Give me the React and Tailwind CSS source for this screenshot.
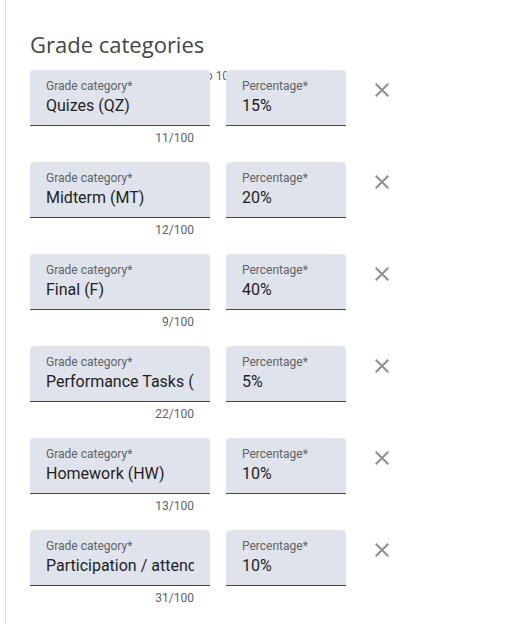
import React from "react";

const rows = [
  { name: "Quizes (QZ)", count: "11/100", pct: "15%" },
  { name: "Midterm (MT)", count: "12/100", pct: "20%" },
  { name: "Final (F)", count: "9/100", pct: "40%" },
  { name: "Performance Tasks (PT)", count: "22/100", pct: "5%" },
  { name: "Homework (HW)", count: "13/100", pct: "10%" },
  { name: "Participation / attendance (PA)", count: "31/100", pct: "10%" },
];

function CloseIcon() {
  return (
    <svg width="24" height="24" viewBox="0 0 24 24" fill="#8e9195">
      <path d="M19 6.41 17.59 5 12 10.59 6.41 5 5 6.41 10.59 12 5 17.59 6.41 19 12 13.41 17.59 19 19 17.59 13.41 12z" />
    </svg>
  );
}

export default function App() {
  return (
    <div className="w-[518px] h-[624px] bg-white overflow-hidden" style={{ fontFamily: "Roboto, 'Liberation Sans', sans-serif" }}>
      <div className="ml-[5px] h-full border-l border-[#e0e0e0] pl-[24px] pt-[30px] relative">
        <h2 className="text-[22px] leading-[28px] text-[#444746] font-normal" style={{ fontFamily: "'Open Sans', Roboto, sans-serif" }}>
          Grade categories
        </h2>
        <span className="absolute left-[196px] top-[68px] text-[12px] leading-4 text-[#5f6368] z-0">
          to 100%
        </span>
        <div className="mt-[12px] flex flex-col gap-[16px] relative z-10">
          {rows.map((r, i) => (
            <div key={i} className="flex items-start">
              <div className="flex flex-col">
                <div className="w-[180px] h-[56px] rounded-t-[4px] bg-[#dfe3eb] border-b border-[#444746] pl-[16px] pr-[16px] pt-[8px] overflow-hidden">
                  <div className="text-[12px] leading-4 text-[#5f6368]">Grade category*</div>
                  <div className="text-[16px] leading-6 text-[#1f1f1f] whitespace-nowrap overflow-hidden">{r.name}</div>
                </div>
                <div className="mt-[4px] pr-[16px] text-right text-[12px] leading-4 text-[#5f6368]">{r.count}</div>
              </div>
              <div className="ml-[16px] w-[120px] h-[56px] rounded-t-[4px] bg-[#dfe3eb] border-b border-[#444746] pl-[16px] pt-[8px]">
                <div className="text-[12px] leading-4 text-[#5f6368]">Percentage*</div>
                <div className="text-[16px] leading-6 text-[#1f1f1f]">{r.pct}</div>
              </div>
              <button className="ml-[16px] w-10 h-10 flex items-center justify-center">
                <CloseIcon />
              </button>
            </div>
          ))}
        </div>
      </div>
    </div>
  );
}
